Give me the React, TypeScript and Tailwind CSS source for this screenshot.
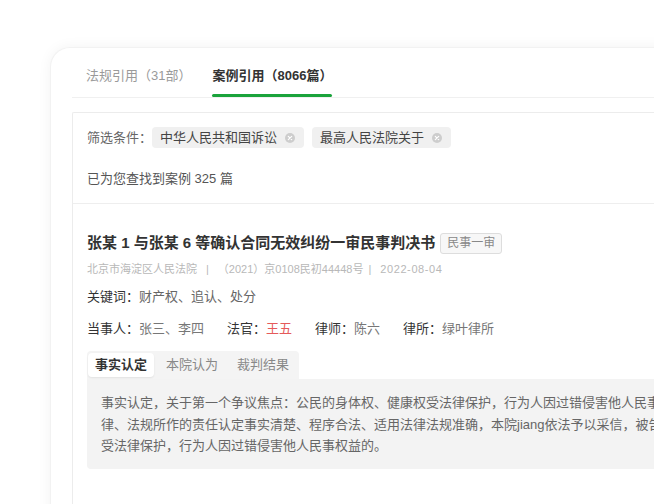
import React from "react";

function ClearIcon() {
  return (
    <svg width="10" height="10" viewBox="0 0 10 10" className="shrink-0">
      <circle cx="5" cy="5" r="5" fill="#cdcdcd" />
      <path d="M3.3 3.3 L6.7 6.7 M6.7 3.3 L3.3 6.7" stroke="#fff" strokeWidth="1.2" strokeLinecap="round" />
    </svg>
  );
}

function Chip({ label }: { label: string }) {
  return (
    <div className="flex h-[21px] items-center gap-[8px] rounded-[4px] bg-[#f0f0f0] pl-[8px] pr-[9px] text-[13px] leading-[18px] text-[#444]">
      <span>{label}</span>
      <ClearIcon />
    </div>
  );
}

export default function App() {
  return (
    <div
      className="relative h-[504px] w-[654px] overflow-hidden bg-white"
      style={{ fontFamily: '"Liberation Sans", "Noto Sans CJK SC", sans-serif' }}
    >
      <div className="ml-[50px] mt-[47px] h-[520px] w-[700px] rounded-tl-[20px] border-l border-t border-[#f2f2f2] bg-white pl-[21px] shadow-[0_0_14px_rgba(0,0,0,0.05)]">
        {/* top tabs */}
        <div className="flex gap-[21px] border-b border-[#f0f0f0] pl-[14px]">
          <div className="flex flex-col pt-[19px]">
            <span className="text-[13px] leading-[18px] text-[#9a9a9a]">法规引用（31部）</span>
            <span className="mt-[9px] h-[3px] rounded-full bg-transparent" />
          </div>
          <div className="flex flex-col pt-[19px]">
            <span className="text-[13px] font-semibold leading-[18px] text-[#333]">案例引用（8066篇）</span>
            <span className="mt-[9px] h-[3px] rounded-full bg-[#1aa33b]" />
          </div>
        </div>

        {/* content panel */}
        <div className="mt-[14px] h-[420px] rounded-tl-[2px] border-l border-t border-[#ececec]">
          <div className="border-b border-[#eeeeee] pb-[15px] pl-[14px] pt-[14px]">
            <div className="flex items-center">
              <span className="text-[13px] leading-[18px] text-[#666]">筛选条件：</span>
              <div className="flex items-center gap-[8px]">
                <Chip label="中华人民共和国诉讼" />
                <Chip label="最高人民法院关于" />
              </div>
            </div>
            <div className="mt-[22px] text-[13px] leading-[18px] text-[#555]">已为您查找到案例 325 篇</div>
          </div>

          <div className="pl-[14px] pt-[28px]">
            <div className="flex items-center">
              <span className="whitespace-nowrap text-[15px] font-semibold leading-[22px] text-[#333]">
                张某 1 与张某 6 等确认合同无效纠纷一审民事判决书
              </span>
              <span className="ml-[5px] flex h-[21px] items-center rounded-[3px] border border-[#dddddd] bg-[#f7f7f7] px-[6px] text-[12px] text-[#888]">
                民事一审
              </span>
            </div>
            <div className="mt-[7px] flex items-center whitespace-nowrap text-[11px] leading-[16px] text-[#b8b8b8]">
              <span>北京市海淀区人民法院</span>
              <span className="mx-[9px]">|</span>
              <span>（2021）京0108民初44448号</span>
              <span className="ml-[5px] mr-[9px]">|</span>
              <span className="tracking-[0.6px]">2022-08-04</span>
            </div>
            <div className="mt-[11px] text-[13px] leading-[18px]">
              <span className="text-[#333]">关键词：</span>
              <span className="text-[#666]">财产权、追认、处分</span>
            </div>
            <div className="mt-[14px] flex gap-[23px] text-[13px] leading-[18px]">
              <div>
                <span className="text-[#333]">当事人：</span>
                <span className="text-[#777]">张三、李四</span>
              </div>
              <div>
                <span className="text-[#333]">法官：</span>
                <span className="text-[#e55a5a]">王五</span>
              </div>
              <div>
                <span className="text-[#333]">律师：</span>
                <span className="text-[#777]">陈六</span>
              </div>
              <div>
                <span className="text-[#333]">律所：</span>
                <span className="text-[#777]">绿叶律所</span>
              </div>
            </div>

            <div className="mt-[13px] flex">
              <div className="flex gap-[5px] rounded-t-[4px] bg-[#f4f4f4] py-[2px] pl-[1px] pr-[3px]">
                <span className="rounded-[4px] bg-white px-[7px] text-[13px] font-semibold leading-[24px] text-[#333] shadow-[0_1px_2px_rgba(0,0,0,0.08)]">
                  事实认定
                </span>
                <span className="px-[7px] text-[13px] leading-[24px] text-[#888]">本院认为</span>
                <span className="px-[7px] text-[13px] leading-[24px] text-[#888]">裁判结果</span>
              </div>
            </div>
            <div className="rounded-b-[4px] bg-[#f3f3f3] pb-[12px] pl-[14px] pt-[13px] text-[13px] leading-[21.5px] text-[#666]">
              <div className="whitespace-nowrap">事实认定，关于第一个争议焦点：公民的身体权、健康权受法律保护，行为人因过错侵害他人民事权益</div>
              <div className="whitespace-nowrap">律、法规所作的责任认定事实清楚、程序合法、适用法律法规准确，本院jiang依法予以采信，被告</div>
              <div className="whitespace-nowrap">受法律保护，行为人因过错侵害他人民事权益的。</div>
            </div>
          </div>
        </div>
      </div>
    </div>
  );
}
